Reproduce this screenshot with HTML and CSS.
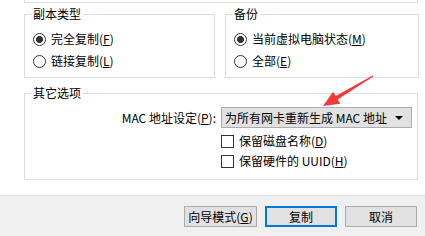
FILE: index.html
```html
<!DOCTYPE html>
<html lang="zh-CN">

<head>
    <meta charset="UTF-8">
    <meta name="viewport" content="width=device-width, initial-scale=1.0">
    <title>克隆虚拟机</title>
    <link rel="stylesheet" href="styles.css">
</head>

<body>
    <div class="dialog">
        <div class="content">
            <div class="prev-box"></div>

            <div class="top-row">
                <fieldset class="group">
                    <legend class="group__title">副本类型</legend>
                    <div class="group__body">
                        <label class="option">
                            <input type="radio" name="type" checked>
                            <span>完全复制(<u>F</u>)</span>
                        </label>
                        <label class="option">
                            <input type="radio" name="type">
                            <span>链接复制(<u>L</u>)</span>
                        </label>
                    </div>
                </fieldset>

                <fieldset class="group">
                    <legend class="group__title">备份</legend>
                    <div class="group__body">
                        <label class="option">
                            <input type="radio" name="backup" checked>
                            <span>当前虚拟电脑状态(<u>M</u>)</span>
                        </label>
                        <label class="option">
                            <input type="radio" name="backup">
                            <span>全部(<u>E</u>)</span>
                        </label>
                    </div>
                </fieldset>
            </div>

            <fieldset class="group group--other">
                <legend class="group__title">其它选项</legend>
                <div class="other">
                    <span class="other__label">MAC 地址设定(<u>P</u>):</span>
                    <div class="select">
                        <span>为所有网卡重新生成 MAC 地址</span>
                        <span class="select__arrow"></span>
                    </div>
                    <label class="option option--check">
                        <input type="checkbox">
                        <span>保留磁盘名称(<u>D</u>)</span>
                    </label>
                    <label class="option option--check">
                        <input type="checkbox">
                        <span>保留硬件的 UUID(<u>H</u>)</span>
                    </label>
                </div>
            </fieldset>
        </div>

        <div class="footer">
            <button class="btn">向导模式(<u>G</u>)</button>
            <button class="btn btn--default">复制</button>
            <button class="btn">取消</button>
        </div>

        <!-- red annotation arrow -->
        <svg class="annot" width="60" height="42" viewBox="0 0 60 42">
            <polygon fill="#f23a3a"
                points="54.7,5.5 17.7,26.1 15.1,21.8 5,36 22.3,33.8 19.7,29.5 55.3,6.5" />
        </svg>
    </div>
</body>

</html>
```

FILE: styles.css
```css
*,
*::after,
*::before {
    padding: 0;
    margin: 0;
    box-sizing: border-box;
}

body {
    width: 425px;
    height: 236px;
    overflow: hidden;
    background: #fff;
    font-family: "Noto Sans CJK SC", "DejaVu Sans", sans-serif;
    font-size: 12px;
    line-height: 16px;
    color: #000;
}

.dialog {
    position: relative;
    display: flex;
    flex-direction: column;
    height: 236px;
}

.content {
    height: 195px;
    padding: 0 7px 0 24px;
}

.prev-box {
    height: 3px;
    border: 1px solid #dcdcdc;
    border-top: none;
}

.top-row {
    display: grid;
    grid-template-columns: 191px 194px;
    column-gap: 10px;
    margin-top: 3px;
}

.group {
    border: 1px solid #dcdcdc;
    padding: 0;
    margin: 0;
    min-width: 0;
}

.group__title {
    margin-left: 6px;
    padding: 0 2px;
    line-height: 16px;
}

.group__body {
    padding: 6px 8px 5px;
}

.option {
    display: flex;
    align-items: center;
    gap: 5px;
    height: 22px;
}

.option input {
    appearance: none;
    width: 13px;
    height: 13px;
    border: 1px solid #333;
    background: #fff;
    flex: none;
}

.option input[type="radio"] {
    border-radius: 50%;
}

.option input[type="radio"]:checked {
    background: radial-gradient(circle, #333 3.2px, #fff 3.8px);
}

.group--other {
    margin-top: 7px;
}

.other {
    display: grid;
    grid-template-columns: 1fr 191px;
    column-gap: 5px;
    padding: 6px 5px 8px 8px;
}

.other__label {
    text-align: right;
    align-self: center;
}

.select {
    display: flex;
    align-items: center;
    justify-content: space-between;
    height: 21px;
    padding: 0 8px 0 3px;
    background: #e1e1e1;
    border: 1px solid #adadad;
}

.select__arrow {
    border-left: 4px solid transparent;
    border-right: 4px solid transparent;
    border-top: 4px solid #000;
}

.option--check {
    grid-column: 2;
    height: 20px;
}

.option--check:first-of-type {
    margin-top: 3px;
}

.footer {
    flex: 1;
    display: flex;
    justify-content: flex-end;
    gap: 8px;
    padding: 10px 8px 0;
    background: #f0f0f0;
    border-top: 1px solid #dfdfdf;
}

.btn {
    width: 72px;
    height: 21px;
    font: inherit;
    color: #000;
    background: #e1e1e1;
    border: 1px solid #adadad;
}

.btn:first-child {
    width: 73px;
}

.btn--default {
    border: 2px solid #0078d7;
}

.annot {
    position: absolute;
    left: 318px;
    top: 70px;
}
```
